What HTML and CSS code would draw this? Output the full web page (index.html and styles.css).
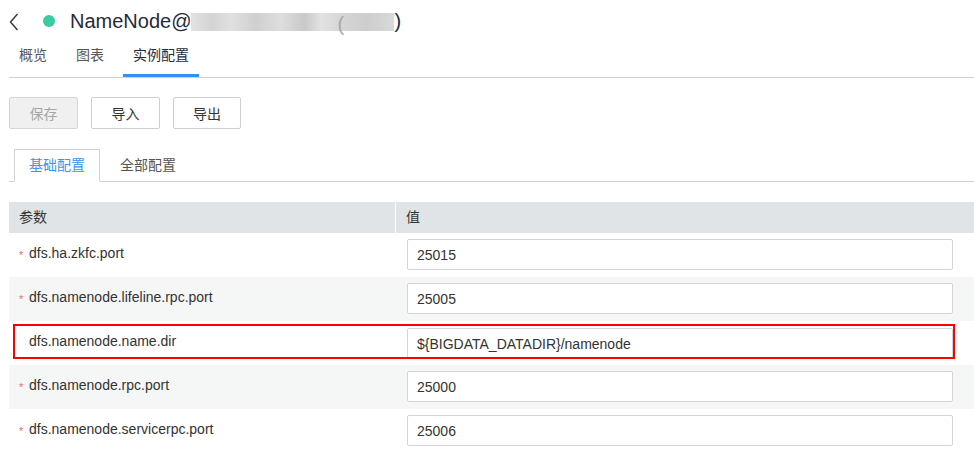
FILE: index.html
```html
<!DOCTYPE html>
<html lang="zh">
<head>
<meta charset="utf-8">
<title>NameNode 实例配置</title>
<link rel="stylesheet" href="styles.css">
</head>
<body>
<div class="page">
  <div class="title-bar">
    <svg class="back" width="10" height="18" viewBox="0 0 10 18"><path d="M8.5 1 L1.5 9 L8.5 17" fill="none" stroke="#333" stroke-width="1.4"/></svg>
    <span class="dot"></span>
    <span class="title">NameNode@<span class="masked"><span class="paren">(</span></span>)</span>
  </div>

  <div class="nav-tabs">
    <div class="nav-tab">概览</div>
    <div class="nav-tab">图表</div>
    <div class="nav-tab active">实例配置</div>
  </div>

  <div class="toolbar">
    <button class="btn disabled">保存</button>
    <button class="btn">导入</button>
    <button class="btn">导出</button>
  </div>

  <div class="sub-tabs">
    <div class="sub-tab active">基础配置</div>
    <div class="sub-tab">全部配置</div>
  </div>

  <div class="table">
    <div class="thead">
      <div class="th th-name">参数</div>
      <div class="th th-value">值</div>
    </div>
    <div class="row">
      <div class="cell-name"><span class="req">*</span>dfs.ha.zkfc.port</div>
      <div class="cell-value"><div class="input">25015</div></div>
    </div>
    <div class="row alt">
      <div class="cell-name"><span class="req">*</span>dfs.namenode.lifeline.rpc.port</div>
      <div class="cell-value"><div class="input">25005</div></div>
    </div>
    <div class="row highlighted">
      <div class="cell-name"><span class="req none"></span>dfs.namenode.name.dir</div>
      <div class="cell-value"><div class="input">${BIGDATA_DATADIR}/namenode</div></div>
      <div class="mark"></div>
    </div>
    <div class="row alt">
      <div class="cell-name"><span class="req">*</span>dfs.namenode.rpc.port</div>
      <div class="cell-value"><div class="input">25000</div></div>
    </div>
    <div class="row">
      <div class="cell-name"><span class="req">*</span>dfs.namenode.servicerpc.port</div>
      <div class="cell-value"><div class="input">25006</div></div>
    </div>
  </div>
</div>
</body>
</html>
```

FILE: styles.css
```css
* { box-sizing: border-box; }
html, body { margin: 0; padding: 0; background: #fff; }
body {
  font-family: "Liberation Sans", Arial, "Noto Sans CJK SC", sans-serif;
  font-size: 14px;
  color: #333;
  overflow: hidden;
}
.page { padding-left: 9px; }

.title-bar {
  height: 42px;
  display: flex;
  align-items: center;
}
.back { display: block; margin-left: 0; margin-top: 1px; }
.dot {
  width: 12px; height: 12px; border-radius: 50%;
  background: #3dc9a1;
  margin-left: 24px;
}
.title {
  font-size: 20px;
  color: #252b3a;
  margin-left: 15px;
  display: flex;
  align-items: center;
  line-height: 24px;
}
.masked {
  display: inline-block;
  width: 203px;
  height: 18px;
  margin-top: 1px;
  background: linear-gradient(90deg, #e2e2e2 0%, #d4d4d4 10%, #e0e0e0 20%, #cfcfcf 32%, #dedede 44%, #c9c9c9 56%, #e2e2e2 64%, #d6d6d6 74%, #cdcdcd 86%, #d9d9d9 100%);
  position: relative;
  color: #b0b0b0;
  font-size: 20px;
  line-height: 18px;
}
.paren { position: absolute; left: 146px; top: 2px; color: #a8a8a8; }

.nav-tabs {
  display: flex;
  gap: 9px;
  border-bottom: 1px solid #d2d2d2;
}
.nav-tab {
  padding: 3px 10px 9px;
  line-height: 20px;
  border-bottom: 3px solid transparent;
  color: #555;
}
.nav-tab.active { border-bottom-color: #3093f0; color: #252b3a; }

.toolbar {
  display: flex;
  gap: 13px;
  margin-top: 19px;
}
.btn {
  font: inherit;
  font-size: 14px;
  height: 32px;
  width: 69px;
  border: 1px solid #cfcfcf;
  border-radius: 2px;
  background: #fff;
  color: #333;
  padding: 0;
}
.btn:nth-child(3) { width: 68px; }
.btn.disabled { background: #f0f0f0; color: #a6a6a6; border-color: #d6d6d6; }

.sub-tabs {
  display: flex;
  gap: 4px;
  margin-top: 20px;
  border-bottom: 1px solid #d2d2d2;
  padding-left: 5px;
}
.sub-tab {
  height: 33px;
  line-height: 31px;
  padding: 0 15px;
  border: 1px solid transparent;
  margin-bottom: -1px;
  color: #555;
}
.sub-tab.active {
  border-color: #d2d2d2;
  border-bottom-color: #fff;
  background: #fff;
  color: #3b95ee;
  padding: 0 14px;
}

.table { margin-top: 20px; }
.thead {
  display: flex;
  height: 31px;
  background: #e1e4e6;
}
.th { line-height: 31px; padding-left: 10px; color: #333; }
.th-name { width: 387px; border-right: 1px solid #fff; }
.th-value { flex: 1; }

.row {
  display: flex;
  height: 44px;
  position: relative;
  background: #fff;
}
.row.alt { background: #f5f7f7; }
.cell-name {
  width: 388px;
  padding: 10px 0 0 10px;
  line-height: 20px;
  display: flex;
  color: #333;
}
.req {
  width: 10px;
  color: #f06a6a;
  font-size: 11px;
  line-height: 24px;
  padding-top: 0;
}
.cell-value {
  flex: 1;
  padding: 6px 21px 0 10px;
}
.input {
  height: 31px;
  border: 1px solid #d4d4d4;
  border-radius: 2px;
  background: #fff;
  padding-left: 9px;
  line-height: 30px;
  color: #333;
}
.highlighted .cell-value { padding-top: 7px; }
.mark {
  position: absolute;
  left: 4px;
  right: 19px;
  top: 3px;
  height: 35px;
  border: 2px solid #f00;
  pointer-events: none;
}
```
